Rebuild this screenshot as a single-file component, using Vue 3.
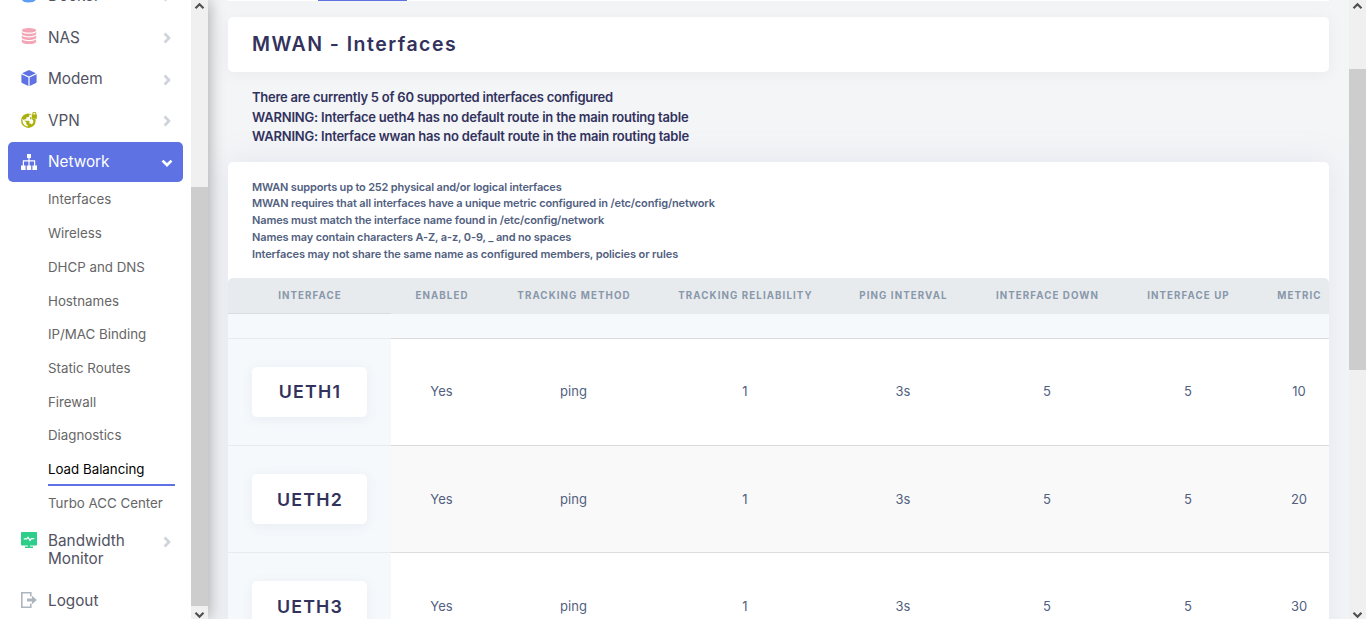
<script setup>
const topItems = [
  { id: 'docker', label: 'Docker' },
  { id: 'nas', label: 'NAS' },
  { id: 'modem', label: 'Modem' },
  { id: 'vpn', label: 'VPN' },
  { id: 'network', label: 'Network', open: true }
]
const subItems = ['Interfaces', 'Wireless', 'DHCP and DNS', 'Hostnames', 'IP/MAC Binding', 'Static Routes', 'Firewall', 'Diagnostics', 'Load Balancing', 'Turbo ACC Center']
const active = 'Load Balancing'

const notices = [
  'There are currently 5 of 60 supported interfaces configured',
  'WARNING: Interface ueth4 has no default route in the main routing table',
  'WARNING: Interface wwan has no default route in the main routing table'
]
const rules = [
  'MWAN supports up to 252 physical and/or logical interfaces',
  'MWAN requires that all interfaces have a unique metric configured in /etc/config/network',
  'Names must match the interface name found in /etc/config/network',
  'Names may contain characters A-Z, a-z, 0-9, _ and no spaces',
  'Interfaces may not share the same name as configured members, policies or rules'
]
const columns = ['Interface', 'Enabled', 'Tracking method', 'Tracking reliability', 'Ping interval', 'Interface down', 'Interface up', 'Metric']
const rows = [
  ['UETH1', 'Yes', 'ping', '1', '3s', '5', '5', '10'],
  ['UETH2', 'Yes', 'ping', '1', '3s', '5', '5', '20'],
  ['UETH3', 'Yes', 'ping', '1', '3s', '5', '5', '30']
]
</script>

<template>
  <div class="page">
    <aside class="sidebar">
      <nav class="menu">
        <template v-for="item in topItems" :key="item.id">
          <a class="item" :class="[item.id, { open: item.open }]">
            <svg class="icon" viewBox="0 0 16 16">
              <path v-if="item.id === 'docker'" d="M0 5h16v4c0 4.500-3 6.500-8.500 6.500S0 13.500 0 9z" fill="#5e9cf5" />
              <g v-else-if="item.id === 'nas'" fill="#f3a4b5">
                <ellipse cx="8" cy="2.300" rx="7.200" ry="2.300" />
                <path d="M.8 3.900C2.600 5.500 5 5.800 8 5.800s5.400-.3 7.200-1.900v1.900C15.200 7.300 12 8.300 8 8.300S.8 7.300.8 5.800z" />
                <path d="M.8 7.600C2.600 9.200 5 9.500 8 9.500s5.400-.3 7.200-1.900v1.900c0 1.500-3.200 2.500-7.200 2.500S.8 11 .8 9.500z" />
                <path d="M.8 11.300c1.800 1.600 4.200 1.900 7.200 1.900s5.400-.3 7.200-1.900v2.100C15.200 15 12 16 8 16S.8 15 .8 13.400z" />
              </g>
              <g v-else-if="item.id === 'modem'" fill="#5e72e4">
                <path d="M8 0l6.900 3.200L8 6.500 1.100 3.200z" />
                <path d="M.4 4.300L7.400 7.600V16L1 12.900a1 1 0 0 1-.6-.9z" />
                <path d="M15.600 4.300L8.600 7.600V16l6.400-3.100a1 1 0 0 0 .6-.9z" />
              </g>
              <g v-else-if="item.id === 'vpn'">
                <circle cx="7.400" cy="8.700" r="7.300" fill="#abb008" />
                <path d="M1.400 6.700l3.900 3.900v.8c0 .9.600 1.500 1.400 1.500v1.500C3.500 14 1.500 11.600 1.500 8.700zM8.300 2.400v1.400c0 .8-.6 1.400-1.400 1.400H5.400v1.400c0 .4-.3.700-.7.700H3.400v1.500h4.300c.4 0 .7.300.7.700v2.100h.8c.7 0 1.200.4 1.400 1 1-1 1.700-2.200 1.900-3.700l-1.400-1.600H9V5.200h1.800V2.700z" fill="#fff" />
                <path d="M10.300 0h5.700v7h-5.700z" fill="#fff" />
                <path d="M10.800 2.500h.5v-.7a2 2 0 0 1 4 0v.7h.6v4.300h-5.100zm1.500 0h2v-.7a1 1 0 0 0-2 0z" fill="#abb008" />
              </g>
              <path v-else fill="#fff" d="M6 0h4v4H8.600v2.200h5.600v5.200H16V16h-4.600v-4.600H13V7.400H8.600v4h1.600V16H5.800v-4.600h1.600v-4H3v4h1.600V16H0v-4.600h1.800V6.200h5.600V4H6z" />
            </svg>
            <span class="label">{{ item.label }}</span>
            <svg v-if="item.open" class="chev" viewBox="0 0 12 12"><path d="M1.500 3.600L6 8l4.500-4.400" fill="none" stroke="#fff" stroke-width="2.700" /></svg>
            <svg v-else class="chev" viewBox="0 0 12 12"><path d="M3.600 1.500L8 6l-4.400 4.500" fill="none" stroke="#ced4da" stroke-width="2.700" /></svg>
          </a>
        </template>
        <div class="submenu">
          <a v-for="s in subItems" :key="s" class="sub" :class="{ active: s === active }"><span>{{ s }}</span></a>
        </div>
        <a class="item tall">
          <svg class="icon" viewBox="0 0 16 16">
            <path d="M1 0h14a1 1 0 0 1 1 1v11.500a1 1 0 0 1-1 1H9v1h3V16H4v-1.500h3v-1H1a1 1 0 0 1-1-1V1a1 1 0 0 1 1-1z" fill="#2dce89" />
            <path d="M2.800 6.800h2.900L7 5.200l2 3.200 1.300-1.800h2.900" fill="none" stroke="#fff" stroke-width="1.200" />
          </svg>
          <span class="label">Bandwidth<br>Monitor</span>
          <svg class="chev" viewBox="0 0 12 12"><path d="M3.600 1.500L8 6l-4.400 4.500" fill="none" stroke="#ced4da" stroke-width="2.700" /></svg>
        </a>
        <a class="item logout">
          <svg class="icon" viewBox="0 0 16 16">
            <path d="M9.800 4.500V.8H.8v14.400h9V11.500" fill="none" stroke="#adb5bd" stroke-width="1.600" />
            <path d="M6 6.400h5V3.800L15.800 8 11 12.200V9.600H6z" fill="#adb5bd" />
          </svg>
          <span class="label">Logout</span>
        </a>
      </nav>
      <div class="scrollbar side">
        <svg viewBox="0 0 17 13"><path d="M4.500 8.300l4-4 4 4" /></svg>
        <div class="thumb"></div>
        <svg viewBox="0 0 17 13"><path d="M4.500 6.800l4 4 4-4" /></svg>
      </div>
    </aside>

    <main class="main">
      <div class="tabs"><span class="tab-on"></span></div>
      <h2 class="title">MWAN - Interfaces</h2>
      <div class="notices"><p v-for="n in notices" :key="n">{{ n }}</p></div>
      <section class="panel">
        <div class="rules"><p v-for="r in rules" :key="r">{{ r }}</p></div>
        <div class="table">
          <div class="row head"><div v-for="c in columns" :key="c" class="th">{{ c }}</div></div>
          <div class="row blank"><div class="lead"></div></div>
          <div v-for="r in rows" :key="r[0]" class="row data">
            <div class="lead"><div class="name">{{ r[0] }}</div></div>
            <div v-for="(v, i) in r.slice(1)" :key="i" class="td">{{ v }}</div>
          </div>
        </div>
      </section>
    </main>

    <div class="scrollbar window">
      <svg viewBox="0 0 17 13"><path d="M4.500 8.300l4-4 4 4" /></svg>
      <div class="thumb"></div>
      <svg viewBox="0 0 17 13"><path d="M4.500 6.800l4 4 4-4" /></svg>
    </div>
  </div>
</template>

<style>
body { margin: 0; overflow: hidden; }
</style>

<style scoped>
* { box-sizing: border-box; }
p, h2 { margin: 0; }
.page { display: flex; width: 1366px; height: 619px; overflow: hidden; background: #f4f5f7; font-family: Inter, "Liberation Sans", sans-serif; }

.sidebar { display: flex; flex: none; width: 208px; background: #fff; box-shadow: 0 0 16px rgba(0, 0, 0, .36); position: relative; z-index: 1; }
.menu { flex: 1; min-width: 0; margin-top: -25px; padding: 0 8px; }
.item { display: flex; align-items: center; height: 40px; margin-bottom: 1.750px; padding: 0 10px 0 13px; border-radius: 5px; color: #525262; font-size: 15.300px; line-height: 18px; }
.item.open { background: #5e72e4; color: #fff; margin-bottom: 0; }
.icon { flex: none; width: 16px; height: 16px; margin: -1px 11px 0 0; }
.label { flex: 1; padding-top: 1px; }
.docker .label, .nas .label { padding-top: 2px; }
.open .label { padding-top: 0; }
.chev { flex: none; width: 12px; height: 12px; margin-top: 2px; }
.submenu { padding-left: 40px; padding-right: 8px; }
.sub { display: flex; align-items: center; height: 33.750px; padding-top: .6px; font-size: 13.300px; color: #666; }
.sub:nth-child(4) { padding-top: 1.500px; }
.sub.active { color: #000; border-bottom: 2px solid #5e72e4; padding-top: 2px; }
.item.tall { height: 55px; align-items: flex-start; padding-top: 12px; margin-bottom: 5.500px; }
.item.tall .icon { margin-top: 0; }
.item.tall .label { padding-top: 0; }
.logout .label { padding-top: 2px; }
.item.tall .chev { margin-top: 4px; }

.scrollbar { display: flex; flex-direction: column; flex: none; width: 17px; background: #f0f0f0; }
.scrollbar svg { flex: none; width: 17px; height: 13px; }
.scrollbar path { fill: none; stroke: #505050; stroke-width: 2.200; }
.thumb { background: #cdcdcd; }
.side .thumb { height: 419px; margin-top: 174px; }
.window .thumb { height: 301px; margin-top: 56px; margin-bottom: auto; }

.main { flex: 1; min-width: 0; padding: 0 20px; overflow: hidden; }
.tabs { display: flex; height: 1px; padding-left: 90px; background: #fff; box-shadow: 0 0 12px rgba(100, 110, 130, .15); }
.tab-on { width: 89px; background: #5e72e4; }
.title { height: 55px; margin-top: 16px; padding-left: 24px; border-radius: 5px; background: #fff; box-shadow: 0 2px 14px rgba(100, 110, 130, .08); color: #32325d; font-size: 19.500px; font-weight: 600; line-height: 55px; letter-spacing: 1.470px; }
.notices { padding: 16px 0 0 24px; color: #32325d; font-size: 13px; font-weight: 600; line-height: 19.500px; letter-spacing: -.205px; }
.notices p:first-child { letter-spacing: -.245px; }
.panel { height: 500px; margin-top: 15.500px; border-radius: 5px 5px 0 0; background: #fff; box-shadow: 0 0 32px rgba(136, 152, 190, .17); }
.rules { height: 116px; padding: 16.500px 0 0 24px; color: #525f7f; font-size: 11px; font-weight: 600; line-height: 16.800px; letter-spacing: -.140px; white-space: nowrap; }
.rules p:first-child { letter-spacing: -.180px; }
.rules p:last-child { letter-spacing: -.110px; }
.table { overflow: hidden; border-radius: 5px 5px 0 0; }
.row { display: grid; grid-template-columns: 163px 101px 163px 180px 136px 152px 130px 92px; }
.head { height: 35px; background: #e8ebee; }
.th { display: flex; align-items: center; justify-content: center; padding-left: 1px; color: #8898aa; font-size: 9.750px; font-weight: 700; letter-spacing: 1.080px; text-transform: uppercase; white-space: nowrap; }
.blank { height: 25px; background: linear-gradient(#e8ebee 1px, #f5f9fc 1px); }
.blank .lead { border-top: 1px solid #dadcdf; }
.data { height: 107px; background: #fff; }
.data:nth-child(even) { background: #f9f9f9; }
.lead { padding: 28px 24px 0; border-top: 1px solid #e8ebee; background: #f5f9fc; }
.name { display: flex; align-items: center; justify-content: center; height: 50px; border-radius: 5px; background: #fff; box-shadow: 0 2px 12px rgba(100, 110, 130, .09); color: #32325d; font-size: 17.800px; font-weight: 600; letter-spacing: 1.200px; padding-left: 1px; }
.td { display: flex; align-items: center; justify-content: center; border-top: 1px solid #dcdcdc; color: #525f7f; font-size: 13px; }
.data:nth-child(3) .td { padding-bottom: 2px; }
.data:nth-child(3) .name { padding-bottom: 1px; }
</style>
